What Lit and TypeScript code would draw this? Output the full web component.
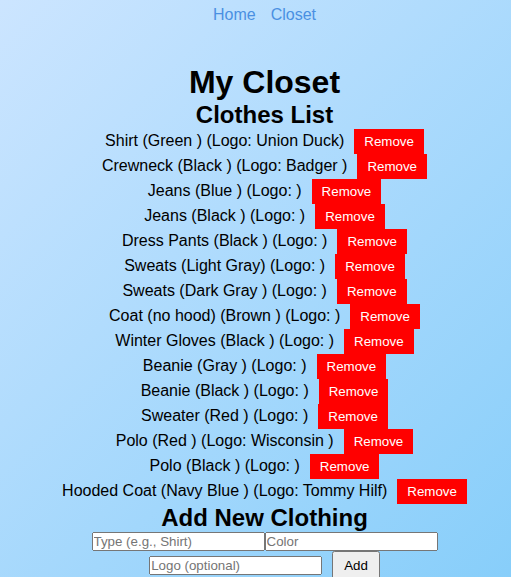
import { LitElement, html, css } from "lit";
import { customElement, state } from "lit/decorators.js";

interface Clothing {
  type: string;
  color: string;
  logo: string;
}

@customElement("app-root")
export class AppRoot extends LitElement {
  static styles = css`
    * {
      box-sizing: border-box;
      margin: 0;
      padding: 0;
    }
    :host {
      display: block;
      min-height: 100vh;
      padding-left: 18px;
      box-sizing: border-box;
      background: linear-gradient(135deg, #cce5ff, #87cefa);
      font-family: "Liberation Sans", Arial, sans-serif;
      font-size: 16px;
      color: #000;
      text-align: center;
    }
    .nav {
      display: flex;
      justify-content: center;
      gap: 15px;
      padding-top: 6px;
      margin-bottom: 40px;
      line-height: 18px;
    }
    .link {
      color: #4a90e2;
      text-decoration: none;
    }
    .title {
      font-size: 32px;
      line-height: 37px;
    }
    .subtitle {
      font-size: 24px;
      line-height: 28px;
    }
    .list {
      list-style: none;
    }
    .remove,
    .add,
    .field {
      font-family: inherit;
    }
    .remove {
      margin-left: 10px;
      padding: 5px 10px;
      border: none;
      background: #f00;
      color: #fff;
      cursor: pointer;
    }
    .form {
      display: flex;
      flex-wrap: wrap;
      justify-content: center;
      align-items: center;
    }
    .field {
      width: 173px;
    }
    .add {
      margin-left: 10px;
      padding: 5px 10px;
    }
  `;

  @state() private clothes: Clothing[] = [
    { type: "Shirt", color: "Green ", logo: "Union Duck" },
    { type: "Crewneck", color: "Black ", logo: "Badger " },
    { type: "Jeans", color: "Blue ", logo: " " },
    { type: "Jeans", color: "Black ", logo: " " },
    { type: "Dress Pants", color: "Black ", logo: " " },
    { type: "Sweats", color: "Light Gray", logo: " " },
    { type: "Sweats", color: "Dark Gray ", logo: " " },
    { type: "Coat (no hood)", color: "Brown ", logo: " " },
    { type: "Winter Gloves", color: "Black ", logo: " " },
    { type: "Beanie", color: "Gray ", logo: " " },
    { type: "Beanie", color: "Black ", logo: " " },
    { type: "Sweater", color: "Red ", logo: " " },
    { type: "Polo", color: "Red ", logo: "Wisconsin " },
    { type: "Polo", color: "Black ", logo: " " },
    { type: "Hooded Coat", color: "Navy Blue ", logo: "Tommy Hilf" },
  ];

  private remove(index: number) {
    this.clothes = this.clothes.filter((_, i) => i !== index);
  }

  private add(event: Event) {
    event.preventDefault();
    const form = event.target as HTMLFormElement;
    const data = new FormData(form);
    this.clothes = [
      ...this.clothes,
      {
        type: String(data.get("type")),
        color: String(data.get("color")),
        logo: String(data.get("logo")),
      },
    ];
    form.reset();
  }

  render() {
    return html`
      <nav class="nav">
        <a class="link" href="#home">Home</a>
        <a class="link" href="#closet">Closet</a>
      </nav>
      <main>
        <h1 class="title">My Closet</h1>
        <h2 class="subtitle">Clothes List</h2>
        <ul class="list">
          ${this.clothes.map(
            (c, i) => html`<li>${c.type} (${c.color}) (Logo: ${c.logo})<button class="remove" type="button" @click=${() => this.remove(i)}>Remove</button></li>`
          )}
        </ul>
        <h2 class="subtitle">Add New Clothing</h2>
        <form class="form" @submit=${this.add}>
          <input class="field" type="text" name="type" placeholder="Type (e.g., Shirt)" aria-label="Type" required />
          <input class="field" type="text" name="color" placeholder="Color" aria-label="Color" required />
          <input class="field" type="text" name="logo" placeholder="Logo (optional)" aria-label="Logo" />
          <button class="add" type="submit">Add</button>
        </form>
      </main>
    `;
  }
}
